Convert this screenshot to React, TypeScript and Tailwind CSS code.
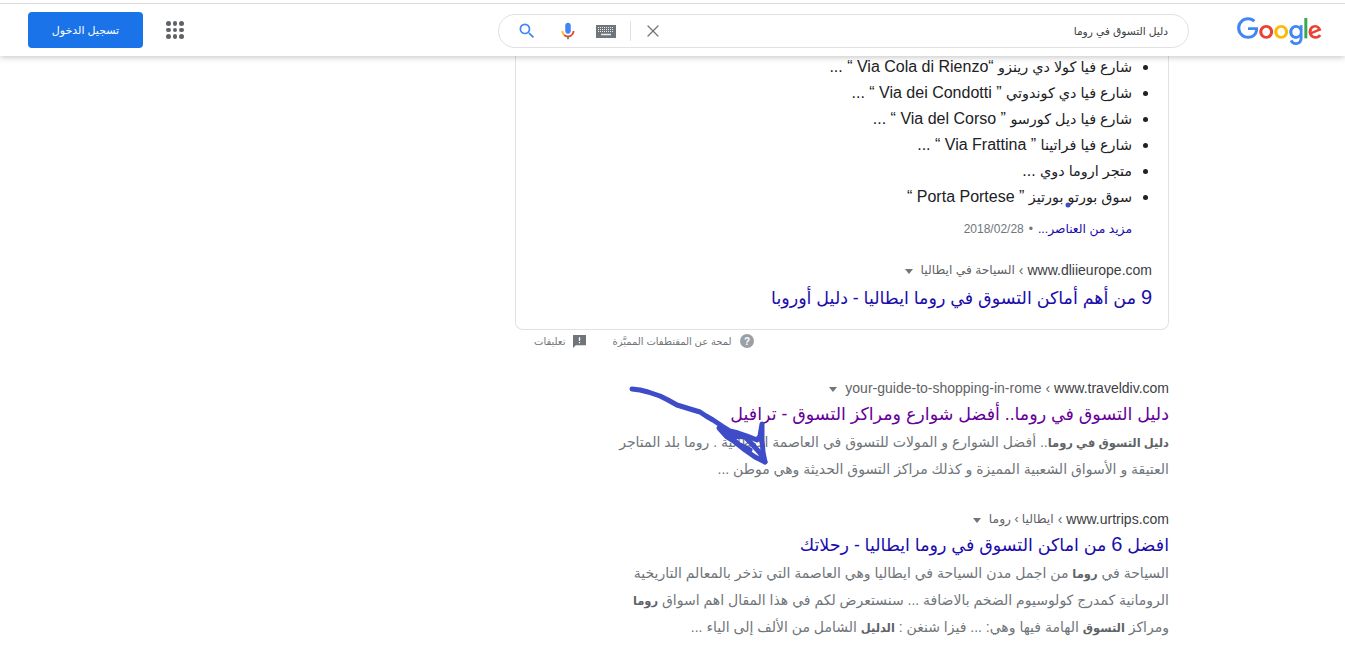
import React from 'react';
import { X } from 'lucide-react';

const arabicFont = "font-['Liberation_Sans','DejaVu_Sans',Arial,sans-serif]";

// Arabic runs sit in their own span: the fallback face is wider than the Latin one
const listItems = [
  { ar: 'شارع فيا كولا دي رينزو', rest: ' “Via Cola di Rienzo “ ...' },
  { ar: 'شارع فيا دي كوندوتي', rest: ' ” Via dei Condotti “ ...' },
  { ar: 'شارع فيا ديل كورسو', rest: ' ” Via del Corso “ ...' },
  { ar: 'شارع فيا فراتينا', rest: ' ” Via Frattina “ ...' },
  { ar: 'متجر اروما دوي', rest: ' ...' },
  { ar: 'سوق بورتو بورتيز', rest: ' ” Porta Portese “' },
];

const GoogleLogo = () => (
  <svg viewBox="0 0 272 92" className="w-[85px] h-[29px]">
    <path fill="#EA4335" d="M115.75 47.18c0 12.77-9.99 22.18-22.25 22.18s-22.25-9.41-22.25-22.18C71.25 34.32 81.24 25 93.5 25s22.25 9.32 22.25 22.18zm-9.74 0c0-7.98-5.79-13.44-12.51-13.44S80.99 39.2 80.99 47.18c0 7.9 5.79 13.44 12.51 13.44s12.51-5.55 12.51-13.44z" />
    <path fill="#FBBC05" d="M163.75 47.18c0 12.77-9.99 22.18-22.25 22.18s-22.25-9.41-22.25-22.18c0-12.85 9.99-22.18 22.25-22.18s22.25 9.32 22.25 22.18zm-9.74 0c0-7.98-5.79-13.44-12.51-13.44s-12.51 5.46-12.51 13.44c0 7.9 5.79 13.44 12.51 13.44s12.51-5.55 12.51-13.44z" />
    <path fill="#4285F4" d="M209.75 26.34v39.82c0 16.38-9.66 23.07-21.08 23.07-10.75 0-17.22-7.19-19.66-13.07l8.48-3.53c1.51 3.61 5.21 7.87 11.17 7.87 7.31 0 11.84-4.51 11.84-13v-3.19h-.34c-2.18 2.69-6.38 5.04-11.68 5.04-11.09 0-21.25-9.66-21.25-22.09 0-12.52 10.16-22.26 21.25-22.26 5.29 0 9.49 2.35 11.68 4.96h.34v-3.61h9.25zm-8.56 20.92c0-7.81-5.21-13.52-11.84-13.52-6.72 0-12.35 5.71-12.35 13.52 0 7.73 5.63 13.36 12.35 13.36 6.63 0 11.84-5.63 11.84-13.36z" />
    <path fill="#34A853" d="M225 3v65h-9.5V3h9.5z" />
    <path fill="#EA4335" d="M262.02 54.48l7.56 5.04c-2.44 3.61-8.32 9.83-18.48 9.83-12.6 0-22.01-9.74-22.01-22.18 0-13.19 9.49-22.18 20.92-22.18 11.51 0 17.14 9.16 18.98 14.11l1.01 2.52-29.65 12.28c2.27 4.45 5.8 6.72 10.75 6.72 4.96 0 8.4-2.44 10.92-6.14zm-23.27-7.98l19.82-8.23c-1.09-2.77-4.37-4.7-8.23-4.7-4.95 0-11.84 4.37-11.59 12.93z" />
    <path fill="#4285F4" d="M35.29 41.41V32H67c.31 1.64.47 3.58.47 5.68 0 7.06-1.93 15.79-8.15 22.01-6.05 6.3-13.78 9.66-24.02 9.66C16.32 69.35.36 53.89.36 34.91.36 15.93 16.32.47 35.3.47c10.5 0 17.98 4.12 23.6 9.49l-6.64 6.64c-4.03-3.78-9.49-6.72-16.97-6.72-13.86 0-24.7 11.17-24.7 25.03 0 13.86 10.84 25.03 24.7 25.03 8.99 0 14.11-3.61 17.39-6.89 2.66-2.66 4.41-6.46 5.1-11.65l-22.49.01z" />
  </svg>
);

const SearchGlyph = () => (
  <svg viewBox="0 0 24 24" className="ml-[18px] w-[20px] h-[20px]">
    <path fill="#4285f4" d="M15.5 14h-.79l-.28-.27A6.471 6.471 0 0 0 16 9.5 6.5 6.5 0 1 0 9.5 16c1.61 0 3.09-.59 4.23-1.57l.27.28v.79l5 4.99L20.49 19l-4.99-5zm-6 0C7.01 14 5 11.99 5 9.5S7.01 5 9.5 5 14 7.01 14 9.5 11.99 14 9.5 14z" />
  </svg>
);

const MicIcon = () => (
  <svg viewBox="0 0 24 24" className="w-[22px] h-[22px]">
    <path fill="#4285F4" d="M12 15c1.66 0 3-1.31 3-2.97V5.97C15 4.31 13.66 3 12 3S9 4.31 9 5.97v6.06C9 13.69 10.34 15 12 15z" />
    <path fill="#34A853" d="M11 18h2v3h-2z" />
    <path fill="#FBBC05" d="M7 12H5c0 1.93.78 3.68 2.05 4.95l1.41-1.41C7.56 14.63 7 13.38 7 12z" />
    <path fill="#EA4335" d="M12 17c-1.38 0-2.63-.56-3.54-1.46l-1.41 1.41C8.32 18.22 10.07 19 12 19s3.68-.78 4.95-2.05l-1.41-1.41C14.63 16.44 13.38 17 12 17z" />
    <path fill="#EA4335" d="M17 12c0 1.38-.56 2.63-1.46 3.54l1.41 1.41C18.22 15.68 19 13.93 19 12h-2z" />
  </svg>
);

const KeyboardIcon = () => (
  <svg viewBox="0 0 20 13" className="w-[20px] h-[13px]">
    <rect width="20" height="13" fill="#70757a" />
    <path stroke="#e8eaed" strokeWidth="1" strokeDasharray="1 1" d="M2 2.5h16M2 4.5h16M2 6.5h16" />
    <path stroke="#e8eaed" strokeWidth="1.5" d="M5 9.5h10" />
  </svg>
);

const AppsIcon = () => (
  <div className="grid grid-cols-3 gap-x-[2px] gap-y-[2px] w-[18px]">
    {Array.from({ length: 9 }).map((_, i) => (
      <span key={i} className="w-[4.6px] h-[4.6px] rounded-full bg-[#5f6368]" />
    ))}
  </div>
);

const Caret = () => (
  <span className="w-0 h-0 border-x-[4.5px] border-x-transparent border-t-[5px] border-t-[#70757a] mr-[8px] mt-[2px]" />
);

const UrlRow = ({ site, crumb, latin }: { site: string; crumb: string; latin?: boolean }) => (
  <div className="flex items-center h-[20px] text-[14px] leading-[20px]">
    <span className="text-[#3c4043]">{site}</span>
    <span className="text-[#5f6368] mx-[4px]">›</span>
    <span className={latin ? 'text-[#5f6368] text-[14px]' : 'text-[#5f6368] text-[12.25px]'}>{crumb}</span>
    <Caret />
  </div>
);

const Header = () => (
  <header dir="ltr" className="relative z-10 h-[56px] bg-white pt-[3px] shadow-[0_1px_6px_rgba(32,33,36,0.28)]">
    <div className="h-[53px] border-t border-[#dadce0] flex items-center pl-[28px]">
      <button className="w-[115px] h-[36px] bg-[#1a73e8] rounded-[4px] text-white text-[11px]">
        تسجيل الدخول
      </button>
      <div className="ml-[23px]">
        <AppsIcon />
      </div>
      <div className="ml-[314px] mt-[2px] w-[691px] h-[34px] border border-[#dfe1e5] rounded-full flex items-center pr-[20px]">
        <SearchGlyph />
        <span className="ml-[20px] flex">
          <MicIcon />
        </span>
        <span className="ml-[17px] flex">
          <KeyboardIcon />
        </span>
        <span className="ml-[14px] w-px h-[20px] bg-[#dfe1e5]" />
        <X className="ml-[12px] w-[20px] h-[20px] text-[#70757a]" strokeWidth={1.5} />
        <span dir="rtl" className="ml-auto text-[10.7px] text-[#3c4043]">دليل التسوق في روما</span>
      </div>
      <div className="ml-[48px] mt-[2px] flex">
        <GoogleLogo />
      </div>
    </div>
  </header>
);

const FeaturedCard = () => (
  <section className="-mt-[2px] h-[276px] w-[654px] border border-t-0 border-[#dfe1e5] rounded-b-[8px] pr-[16px]">
    <ul className="list-disc pr-[20px] text-[16px] leading-[26px] text-[#202124]">
      {listItems.map((item) => (
        <li key={item.ar} className="h-[26px] whitespace-nowrap">
          <span className="text-[14.4px]">{item.ar}</span>
          {item.rest}
        </li>
      ))}
    </ul>
    <div className="mt-[6px] pr-[20px] text-[12px] leading-[26px] text-[#70757a]">
      <span className="text-[12.3px] text-[#1a0dab]">مزيد من العناصر...</span>
      <span className="mx-[5px]">•</span>
      <span>2018/02/28</span>
    </div>
    <div className="mt-[18px]">
      <UrlRow site="www.dliieurope.com" crumb="السياحة في ايطاليا" />
    </div>
    <h3 className="mt-[3px] text-[17.5px] leading-[28px] text-[#1a0dab]">
      <span className="text-[20px]">9</span> من أهم أماكن التسوق في روما ايطاليا - دليل أوروبا
    </h3>
  </section>
);

const Feedback = () => (
  <div dir="ltr" className="w-[654px] h-[22px] flex items-center pl-[19px] text-[10px] text-[#70757a]">
    <span dir="rtl">تعليقات</span>
    <svg viewBox="0 0 14 14" className="ml-[8px] w-[13px] h-[13px]">
      <path fill="#70757a" d="M0 0h14v11H3l-3 3z" />
      <path fill="#fff" d="M6.3 2.5h1.4v4H6.3zM6.3 7.5h1.4v1.4H6.3z" />
    </svg>
    <span dir="rtl" className="ml-[26px]">لمحة عن المقتطفات المميَّزة</span>
    <svg viewBox="0 0 14 14" className="ml-[8px] w-[14px] h-[14px]">
      <circle cx="7" cy="7" r="7" fill="#9aa0a6" />
      <text x="7" y="10.5" textAnchor="middle" fontSize="10" fontWeight="700" fill="#fff" fontFamily="Liberation Sans">?</text>
    </svg>
  </div>
);

const Scribble = () => (
  <svg className="absolute left-0 top-0 pointer-events-none" width="1345" height="657">
    <g fill="none" stroke="#3f4cc8" strokeWidth="5" strokeLinecap="round" strokeLinejoin="round">
      <path d="M632 389 L640 390 L648 392 L660 396 L668 400 L677 405 L690 409 L700 412 L706 416 L713 420 L722 426 L730 431 L719 428 L727 437 L735 442 L745 450 L755 457 L765 462 L763 452 L762 440 L762 424 L760 436 L757 440 L747 436 L738 433 L730 431" />
      <path d="M733 436 L745 437 L752 444 L760 453 L765 462 M728 434 L738 444 L750 450" />
    </g>
    <circle cx="1068" cy="205" r="2.5" fill="#3f4cc8" />
  </svg>
);

export default function App() {
  return (
    <div className={`relative h-[657px] w-[1345px] overflow-hidden bg-white ${arabicFont}`}>
      <Header />
      <main dir="rtl" className="ml-[515px] w-[654px]">
        <FeaturedCard />
        <Feedback />
        <article className="mt-[26px]">
          <UrlRow site="www.traveldiv.com" crumb="your-guide-to-shopping-in-rome" latin />
          <h3 className="mt-[1px] text-[17.5px] leading-[30px] text-[#609] whitespace-nowrap">دليل التسوق في روما.. أفضل شوارع ومراكز التسوق - ترافيل</h3>
          <p className="text-[14px] leading-[26px] text-[#70757a] whitespace-nowrap">
            <b className="text-[11.5px] text-[#5f6368]">دليل التسوق في روما</b>.. أفضل الشوارع و المولات للتسوق في العاصمة الايطالية . روما بلد المتاجر
            <br />
            العتيقة و الأسواق الشعبية المميزة و كذلك مراكز التسوق الحديثة وهي موطن ...
          </p>
        </article>
        <article className="mt-[27px]">
          <UrlRow site="www.urtrips.com" crumb="ايطاليا › روما" />
          <h3 className="mt-[1px] text-[17.5px] leading-[29px] text-[#1a0dab]">
            افضل <span className="text-[20px]">6</span> من اماكن التسوق في روما ايطاليا - رحلاتك
          </h3>
          <p className="text-[14px] leading-[26px] text-[#70757a] whitespace-nowrap">
            السياحة في <b className="text-[11.5px] text-[#5f6368]">روما</b> من اجمل مدن السياحة في ايطاليا وهي العاصمة التي تذخر بالمعالم التاريخية
            <br />
            الرومانية كمدرج كولوسيوم الضخم بالاضافة ... سنستعرض لكم في هذا المقال اهم اسواق <b className="text-[11.5px] text-[#5f6368]">روما</b>
            <br />
            ومراكز <b className="text-[11.5px] text-[#5f6368]">التسوق</b> الهامة فيها وهي: ... فيزا شنغن : <b className="text-[11.5px] text-[#5f6368]">الدليل</b> الشامل من الألف إلى الياء ...
          </p>
        </article>
      </main>
      <Scribble />
    </div>
  );
}
